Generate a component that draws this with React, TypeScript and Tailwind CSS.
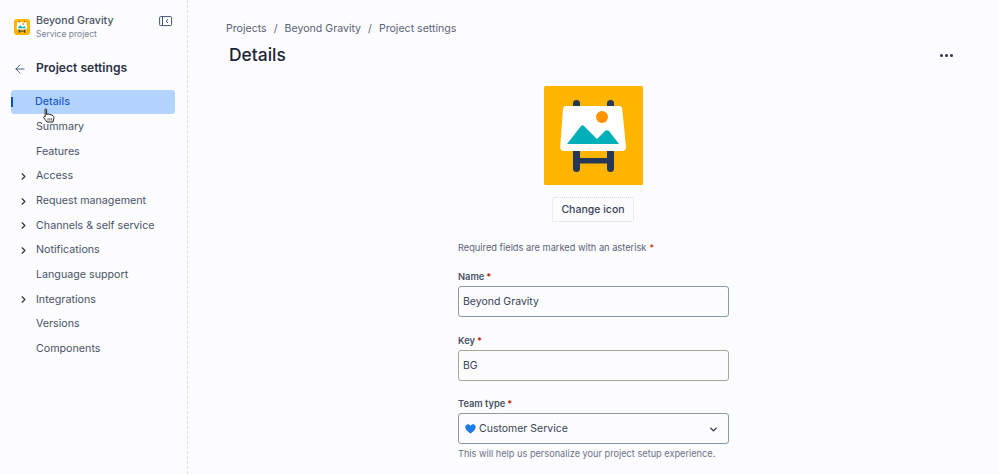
import { ArrowLeft, ChevronDown, ChevronRight } from "lucide-react";

const navItems = [
  { label: "Summary", arrow: false },
  { label: "Features", arrow: false },
  { label: "Access", arrow: true },
  { label: "Request management", arrow: true },
  { label: "Channels & self service", arrow: true },
  { label: "Notifications", arrow: true },
  { label: "Language support", arrow: false },
  { label: "Integrations", arrow: true },
  { label: "Versions", arrow: false },
  { label: "Components", arrow: false },
];

function ProjectIcon({ size }: { size: number }) {
  return (
    <svg width={size} height={size} viewBox="0 0 99 99" className="block">
      <rect width="99" height="99" rx="1.5" fill="#ffb400" />
      <rect x="29" y="14" width="7" height="20" rx="3.5" fill="#253858" />
      <rect x="63" y="14" width="7" height="20" rx="3.5" fill="#253858" />
      <rect x="29" y="50" width="7" height="36" rx="3.5" fill="#253858" />
      <rect x="63" y="50" width="7" height="36" rx="3.5" fill="#253858" />
      <rect x="33" y="72" width="33" height="5.5" fill="#253858" />
      <path
        d="M22 20 H75 Q78 20 78.2 23 L82 61 Q82 65 78 65 H20 Q16 65 16.2 61 L19 23 Q19.2 20 22 20 Z"
        fill="#ffffff"
      />
      <circle cx="58" cy="31" r="6" fill="#ff9400" />
      <path d="M23 58 L37 40 Q38.5 38.5 40 40 L53 53 L61 45 Q63 43.5 65 45 L75 58 Z" fill="#00b0b8" />
    </svg>
  );
}

function HandCursor() {
  return (
    <svg width="14" height="17" viewBox="0 0 14 17" className="absolute left-[42px] top-[108px]">
      <path
        d="M3 1.5 C3 .6 4.6 .6 4.6 1.5 V6.5 L6 6 L7.6 6.4 L9.2 6.9 L11 7.6 C12 8.2 12 9.5 11.8 10.5 L11 14 H5 L1.8 9.8 C1.3 8.8 2.4 8 3.2 8.8 V5 Z"
        fill="#ffffff"
        stroke="#222222"
        strokeWidth="1"
        strokeLinejoin="round"
      />
      <path d="M6 10 V12.6 M7.8 10 V12.6 M9.6 10 V12.6" stroke="#222222" strokeWidth=".7" />
    </svg>
  );
}

function Field({ label, children }: { label: string; children: React.ReactNode }) {
  return (
    <div className="flex flex-col">
      <div className="h-[14px] mb-[2px] text-[9.3px] leading-[14px] font-semibold text-[#4a5366]">
        {label}
        <span className="text-[#bf2600] ml-[2px]">*</span>
      </div>
      {children}
    </div>
  );
}

export default function App() {
  return (
    <div
      className="flex w-[998px] h-[474px] overflow-hidden bg-[#fcfcff] text-[#4a5366]"
      style={{ fontFamily: "Inter, 'Liberation Sans', sans-serif" }}
    >
      {/* Sidebar */}
      <aside className="relative w-[188px] shrink-0 border-r border-dashed border-[#dcdcf2] pt-[14px]">
        <div className="flex items-start pl-[14px]">
          <div className="mt-[5px] rounded-[3px] overflow-hidden">
            <ProjectIcon size={16} />
          </div>
          <div className="ml-[6px] w-[123px]">
            <div className="text-[10.6px] leading-[14px] font-medium text-[#4a5366]">Beyond Gravity</div>
            <div className="text-[8.5px] leading-[13px] mt-[0px] text-[#7a8194]">Service project</div>
          </div>
          <svg width="14" height="11" viewBox="0 0 14 11" className="mt-[2px]">
            <rect x=".6" y=".6" width="12" height="9" rx="1" fill="none" stroke="#44546f" strokeWidth="1" />
            <path d="M3.5 1 V9.5" stroke="#44546f" strokeWidth="1" />
            <path d="M9 3.4 L7 5.2 L9 7" fill="none" stroke="#44546f" strokeWidth="1" />
          </svg>
        </div>

        <div className="flex items-center h-[20px] mt-[17.5px] pl-[13px]">
          <ArrowLeft size={14} strokeWidth={1.6} className="text-[#44546f]" />
          <span className="ml-[9px] text-[12.1px] font-semibold text-[#2b3245]">Project settings</span>
        </div>

        <div className="relative mt-[11.5px] ml-[11px] w-[164px] h-[24px] rounded-[3px] bg-[#b3d4ff] flex items-center pl-[24px]">
          <span className="absolute left-0 top-[7px] h-[10px] w-[1.5px] bg-[#0c4fc4]" />
          <span className="text-[10.7px] font-medium text-[#1c59c9]">Details</span>
        </div>

        <ul className="mt-[0.6px]">
          {navItems.map((item) => (
            <li key={item.label} className="relative flex items-center h-[24.7px] pl-[36px] text-[10.7px] text-[#4a5366]">
              {item.arrow && (
                <ChevronRight size={11} strokeWidth={2.5} className="absolute left-[18px] top-[7px] text-[#2b3245]" />
              )}
              {item.label}
            </li>
          ))}
        </ul>

        <HandCursor />
      </aside>

      {/* Main */}
      <main className="flex-1 relative pl-[38px]">
        <div className="flex items-center h-[16px] mt-[21px] text-[10.6px] text-[#5b6274]">
          <span>Projects</span>
          <span className="mx-[7px]">/</span>
          <span>Beyond Gravity</span>
          <span className="mx-[7px]">/</span>
          <span>Project settings</span>
        </div>
        <div className="flex items-center justify-between h-[24px] mt-[6px] pl-[3px] pr-[45px]">
          <h1 className="text-[17.4px] font-medium text-[#1f2533]">Details</h1>
          <div className="flex gap-[2px]">
            <span className="w-[3px] h-[3px] rounded-full bg-[#2b3245]" />
            <span className="w-[3px] h-[3px] rounded-full bg-[#2b3245]" />
            <span className="w-[3px] h-[3px] rounded-full bg-[#2b3245]" />
          </div>
        </div>

        <div className="w-[271px] ml-[232px]">
          <div className="flex flex-col items-center w-[271px] mt-[19px]">
            <div className="ml-[-1px]">
              <ProjectIcon size={99} />
            </div>
            <div className="mt-[12px] ml-[-1px] w-[82px] h-[25px] pt-[1px] flex items-center justify-center rounded-[2px] border border-dotted border-[#d5d5f2] text-[10.5px] font-medium text-[#3a4256]">
              Change icon
            </div>
          </div>

          <div className="mt-[19px] h-[14px] text-[9.25px] leading-[14px] text-[#5b6274]">
            Required fields are marked with an asterisk
            <span className="ml-[3px] text-[#bf2600]">*</span>
          </div>

          <div className="mt-[15px] flex flex-col gap-[16.5px]">
            <Field label="Name">
              <div className="h-[31px] flex items-center px-[4px] rounded-[3px] border border-[#8c98a4] text-[10.5px] text-[#3a4256]">
                Beyond Gravity
              </div>
            </Field>
            <Field label="Key">
              <div className="h-[31px] pt-[1px] flex items-center px-[4px] rounded-[3px] border border-[#a3a88f] text-[10.5px] text-[#3a4256]">
                BG
              </div>
            </Field>
            <Field label="Team type">
              <div className="h-[31px] pt-[1px] flex items-center justify-between pl-[6px] pr-[9px] rounded-[3px] border border-[#8c98a4] text-[10.5px] text-[#3a4256]">
                <span className="flex items-center gap-[3px]">
                  <svg width="11" height="10" viewBox="0 0 11 10">
                    <path
                      d="M5.5 9.6 C3.4 8 .3 5.8 .3 3 C.3 1.3 1.6 .2 3 .2 C4 .2 5 .8 5.5 1.8 C6 .8 7 .2 8 .2 C9.4 .2 10.7 1.3 10.7 3 C10.7 5.8 7.6 8 5.5 9.6 Z"
                      fill="#1f7be8"
                    />
                  </svg>
                  Customer Service
                </span>
                <ChevronDown size={11} strokeWidth={3} className="text-[#2b3245]" />
              </div>
            </Field>
          </div>
          <div className="mt-[3px] text-[9.2px] leading-[14px] text-[#6b7285]">
            This will help us personalize your project setup experience.
          </div>
        </div>
      </main>
    </div>
  );
}
